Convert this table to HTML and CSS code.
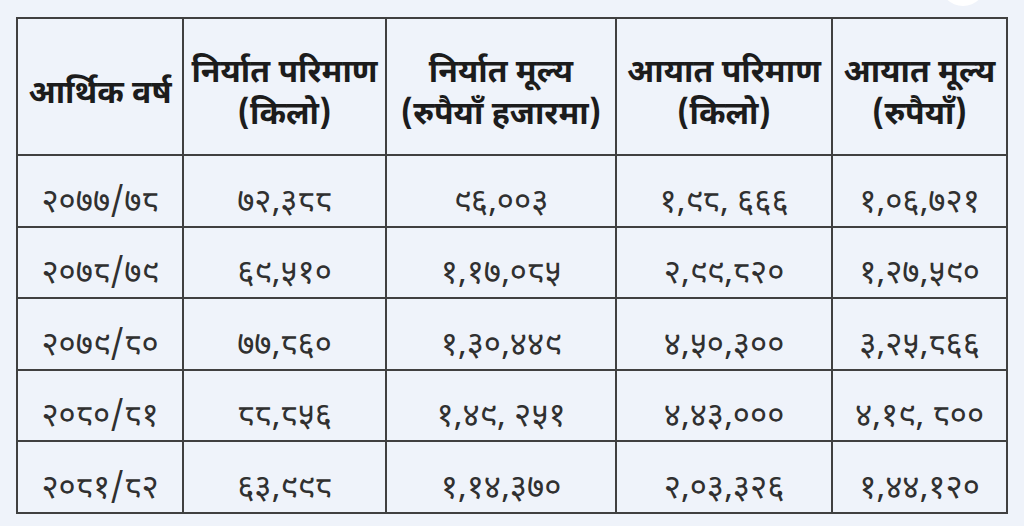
FILE: index.html
```html
<!DOCTYPE html>
<html lang="ne">
<head>
<meta charset="utf-8">
<link rel="stylesheet" href="styles.css">
</head>
<body>
<div class="page">
  <div class="dot"></div>
  <table class="trade">
    <colgroup>
      <col class="c1"><col class="c2"><col class="c3"><col class="c4"><col class="c5">
    </colgroup>
    <thead>
      <tr>
        <th>आर्थिक वर्ष</th>
        <th>निर्यात परिमाण<br>(किलो)</th>
        <th>निर्यात मूल्य<br>(रुपैयाँ हजारमा)</th>
        <th>आयात परिमाण<br>(किलो)</th>
        <th>आयात मूल्य<br>(रुपैयाँ)</th>
      </tr>
    </thead>
    <tbody>
      <tr><td>२०७७/७८</td><td>७२,३८८</td><td>९६,००३</td><td>१,९८, ६६६</td><td>१,०६,७२१</td></tr>
      <tr><td>२०७८/७९</td><td>६९,५१०</td><td>१,१७,०८५</td><td>२,९९,८२०</td><td>१,२७,५९०</td></tr>
      <tr><td>२०७९/८०</td><td>७७,८६०</td><td>१,३०,४४९</td><td>४,५०,३००</td><td>३,२५,८६६</td></tr>
      <tr><td>२०८०/८१</td><td>८८,८५६</td><td>१,४९, २५१</td><td>४,४३,०००</td><td>४,१९, ८००</td></tr>
      <tr><td>२०८१/८२</td><td>६३,९९८</td><td>१,१४,३७०</td><td>२,०३,३२६</td><td>१,४४,१२०</td></tr>
    </tbody>
  </table>
</div>
</body>
</html>
```
FILE: styles.css
```css
html, body {
  margin: 0;
  padding: 0;
  background: #eff3fa;
}
.page {
  position: relative;
  width: 1024px;
  height: 526px;
  overflow: hidden;
  padding: 17px 0 0 16px;
  box-sizing: border-box;
  font-family: "Noto Sans Devanagari", "Mukta", "Lohit Devanagari", "Noto Sans", sans-serif;
  color: #222;
}
.dot {
  position: absolute;
  left: 940px;
  top: -40px;
  width: 46px;
  height: 46px;
  border-radius: 50%;
  background: #ffffff;
}
.trade {
  border-collapse: collapse;
  table-layout: fixed;
  width: 990px;
}
.c1 { width: 166px; }
.c2 { width: 203px; }
.c3 { width: 230px; }
.c4 { width: 216px; }
.c5 { width: 175px; }
.trade th, .trade td {
  border: 2px solid #404040;
  text-align: center;
  vertical-align: middle;
  padding: 0;
  white-space: nowrap;
  overflow: hidden;
}
.trade th {
  height: 119px;
  padding-top: 16px;
  font-size: 32px;
  line-height: 42px;
  font-weight: 700;
  color: #1c1c1c;
}
.trade td {
  height: 43.5px;
  padding-top: 26px;
  font-size: 33px;
  line-height: 40px;
  font-weight: 400;
  color: #303030;
}
```
